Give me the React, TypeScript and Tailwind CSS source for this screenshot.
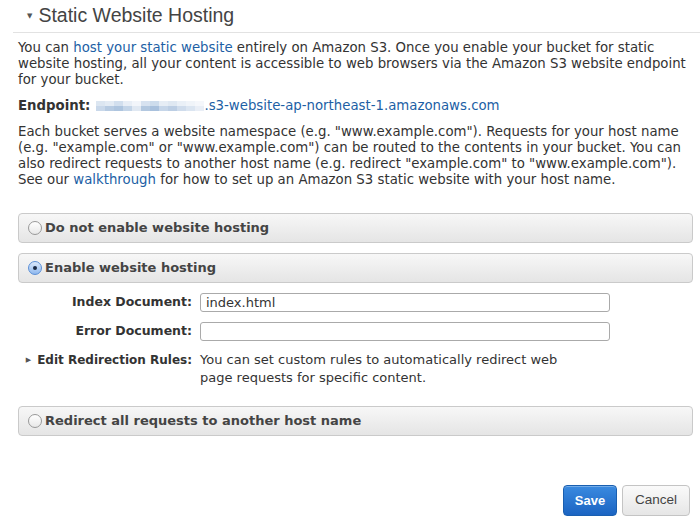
import * as React from "react";

const blur = [
  ["#dce6f1", "#c9d8ea"],
  ["#e3ebf4", "#b7cbe2"],
  ["#d2dfee", "#aec5df"],
  ["#e8eef6", "#c4d5e8"],
  ["#f2f5fa", "#e0e8f2"],
  ["#d7e2f0", "#b3c8e0"],
  ["#cddcec", "#a9c1dd"],
  ["#e6edf5", "#c6d6e9"],
  ["#dfe8f2", "#bccee4"],
  ["#eaf0f7", "#cfdcec"],
  ["#f0f4f9", "#dbe5f1"],
  ["#f5f7fb", "#e9eef6"],
];

export default function App() {
  return (
    <div className="w-[700px] h-[517px] bg-white overflow-hidden font-['DejaVu_Sans',sans-serif] text-[#333]">
      <div className="ml-[13px] border-b border-[#e2e2e2] h-[33px] flex items-center pl-[14px]">
        <span className="text-[7px] text-[#555] mr-[6px]">▼</span>
        <span className="font-['Liberation_Sans',sans-serif] text-[19.5px] text-[#444]">Static Website Hosting</span>
      </div>

      <div className="pl-[18px] text-[13.3px] leading-[16px] whitespace-nowrap">
        <p className="mt-[7px]">
          You can <span className="text-[#1d5fa5]">host your static website</span> entirely on Amazon S3. Once you enable your bucket for static
          <br />
          website hosting, all your content is accessible to web browsers via the Amazon S3 website endpoint
          <br />
          for your bucket.
        </p>

        <div className="mt-[10px] flex items-center h-[16px]">
          <span className="font-bold">Endpoint:</span>
          <span className="ml-[6px] flex flex-col h-[10px]">
            <span className="flex h-[5px]">
              {blur.map((b, i) => (
                <span key={i} className="w-[9px] h-[5px]" style={{ backgroundColor: b[0] }} />
              ))}
            </span>
            <span className="flex h-[5px]">
              {blur.map((b, i) => (
                <span key={i} className="w-[9px] h-[5px]" style={{ backgroundColor: b[1] }} />
              ))}
            </span>
          </span>
          <span className="text-[#1d5fa5]">.s3-website-ap-northeast-1.amazonaws.com</span>
        </div>

        <p className="mt-[10px]">
          Each bucket serves a website namespace (e.g. "www.example.com"). Requests for your host name
          <br />
          (e.g. "example.com" or "www.example.com") can be routed to the contents in your bucket. You can
          <br />
          also redirect requests to another host name (e.g. redirect "example.com" to "www.example.com").
          <br />
          See our <span className="text-[#1d5fa5]">walkthrough</span> for how to set up an Amazon S3 static website with your host name.
        </p>
      </div>

      <div className="ml-[18px] w-[675px] mt-[25px]">
        <RadioBar label="Do not enable website hosting" />
        <div className="mt-[10px]">
          <RadioBar label="Enable website hosting" checked />
        </div>

        <div className="mt-[10px] text-[12.5px]">
          <div className="flex items-center h-[19px]">
            <span className="w-[174px] text-right font-bold">Index Document:</span>
            <input
              className="ml-[8px] w-[410px] h-[19px] border border-[#aaa] rounded-[3px] px-[5px] text-[13px] text-[#333] outline-none font-['DejaVu_Sans',sans-serif]"
              defaultValue="index.html"
            />
          </div>
          <div className="flex items-center h-[19px] mt-[10px]">
            <span className="w-[174px] text-right font-bold">Error Document:</span>
            <input
              className="ml-[8px] w-[410px] h-[19px] border border-[#aaa] rounded-[3px] px-[5px] text-[13px] outline-none"
              defaultValue=""
            />
          </div>
          <div className="flex mt-[10px] leading-[18px]">
            <span className="w-[174px] flex items-center justify-end font-bold h-[18px] whitespace-nowrap text-[12px]">
              <span className="text-[7px] text-[#555] mr-[6px]">▶</span>
              Edit Redirection Rules:
            </span>
            <span className="ml-[8px] text-[13px] whitespace-nowrap">
              You can set custom rules to automatically redirect web
              <br />
              page requests for specific content.
            </span>
          </div>
        </div>

        <div className="mt-[19px]">
          <RadioBar label="Redirect all requests to another host name" />
        </div>
      </div>

      <div className="flex justify-end mt-[49px] pr-[10px] gap-[5px]">
        <button className="h-[31px] w-[54px] rounded-[4px] border border-[#1a5fb0] bg-gradient-to-b from-[#3a8ae0] to-[#1b64c2] text-white text-[13px] font-bold font-['Liberation_Sans',sans-serif] shadow-[inset_0_1px_0_rgba(255,255,255,0.3)]">
          Save
        </button>
        <button className="h-[31px] w-[68px] rounded-[4px] border border-[#c4c4c4] bg-gradient-to-b from-[#fafafa] to-[#e6e6e6] text-[#444] text-[13.5px] font-['Liberation_Sans',sans-serif]">
          Cancel
        </button>
      </div>
    </div>
  );
}

function RadioBar({ label, checked }: { label: string; checked?: boolean }) {
  return (
    <div className="h-[30px] rounded-[4px] border border-[#cacaca] bg-gradient-to-b from-[#f7f7f7] to-[#e5e5e5] flex items-center pl-[9px]">
      {checked ? (
        <span className="w-[14px] h-[14px] rounded-full border border-[#5b8fd6] bg-gradient-to-b from-[#dbe9fb] to-[#8fb8ee] flex items-center justify-center">
          <span className="w-[4px] h-[4px] rounded-full bg-[#1a2a44]" />
        </span>
      ) : (
        <span className="w-[14px] h-[14px] rounded-full border border-[#999] bg-gradient-to-b from-[#ffffff] to-[#e8e8e8]" />
      )}
      <span className="ml-[3px] text-[13px] font-bold text-[#444]">{label}</span>
    </div>
  );
}
